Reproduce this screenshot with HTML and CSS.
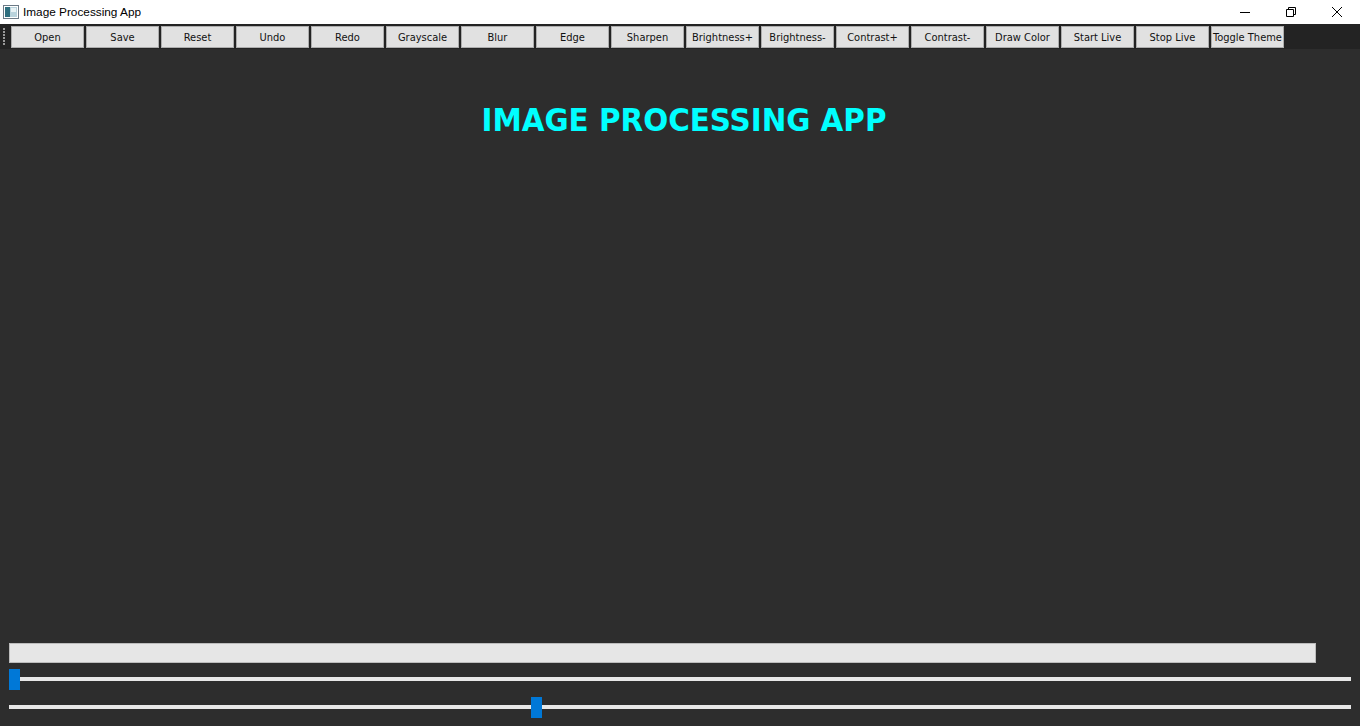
FILE: index.html
```html
<!DOCTYPE html>
<html>
<head>
<meta charset="utf-8">
<link rel="stylesheet" href="styles.css">
</head>
<body>
<div class="window">
  <div class="titlebar">
    <svg class="app-icon" width="16" height="16" viewBox="0 0 16 16">
      <rect x="0.5" y="1.5" width="15" height="13" fill="#fff" stroke="#6c7a86"/>
      <rect x="2" y="3" width="5" height="10" fill="#2f6f7f"/>
      <rect x="7" y="3" width="7" height="10" fill="#b9d3dc"/>
      <rect x="8" y="4" width="5" height="4" fill="#e8f2f5"/>
    </svg>
    <span class="title">Image Processing App</span>
    <div class="controls">
      <div class="ctl">
        <svg width="10" height="10" viewBox="0 0 10 10"><path d="M0 5.5H10" stroke="#000" stroke-width="1"/></svg>
      </div>
      <div class="ctl">
        <svg width="10" height="10" viewBox="0 0 10 10"><path d="M0.5 2.5H7.5V9.5H0.5Z M2.5 2.5V0.5H9.5V7.5H7.5" fill="none" stroke="#000" stroke-width="1"/></svg>
      </div>
      <div class="ctl">
        <svg width="10" height="10" viewBox="0 0 10 10"><path d="M0 0L10 10M10 0L0 10" stroke="#000" stroke-width="1"/></svg>
      </div>
    </div>
  </div>
  <div class="toolbar">
    <div class="grip"><i></i><i></i><i></i><i></i><i></i><i></i></div>
    <button class="btn">Open</button>
    <button class="btn">Save</button>
    <button class="btn">Reset</button>
    <button class="btn">Undo</button>
    <button class="btn">Redo</button>
    <button class="btn">Grayscale</button>
    <button class="btn">Blur</button>
    <button class="btn">Edge</button>
    <button class="btn">Sharpen</button>
    <button class="btn">Brightness+</button>
    <button class="btn">Brightness-</button>
    <button class="btn">Contrast+</button>
    <button class="btn">Contrast-</button>
    <button class="btn">Draw Color</button>
    <button class="btn">Start Live</button>
    <button class="btn">Stop Live</button>
    <button class="btn">Toggle Theme</button>
  </div>
  <div class="main">
    <h1 class="heading">IMAGE PROCESSING APP</h1>
    <div class="spacer"></div>
    <div class="progress"></div>
    <div class="slider"><div class="track"></div><div class="handle" style="left:0px"></div></div>
    <div class="slider"><div class="track"></div><div class="handle" style="left:522px"></div></div>
  </div>
</div>
</body>
</html>
```
FILE: styles.css
```css
* { box-sizing: border-box; }
html, body { margin: 0; padding: 0; }
body { width: 1360px; height: 726px; overflow: hidden; background: #2d2d2d; }
.window { display: flex; flex-direction: column; height: 726px; }
.titlebar {
  height: 24px; background: #fff; display: flex; align-items: center;
  font-family: "Liberation Sans", Arial, sans-serif; font-size: 11.8px; color: #000;
}
.app-icon { margin-left: 3px; margin-right: 4px; }
.title { line-height: 24px; }
.controls { margin-left: auto; display: flex; height: 24px; }
.ctl { width: 46px; height: 24px; display: flex; align-items: center; justify-content: center; }
.toolbar {
  height: 25px; background: #232323; display: flex; align-items: flex-start;
  padding-top: 2px; gap: 2px;
}
.grip { width: 9px; height: 22px; display: flex; flex-direction: column; padding: 2px 0 0 3px; gap: 1px; }
.grip i { display: block; width: 2px; height: 2px; background: #9a9a9a; }
.btn {
  width: 73px; height: 22px; margin: 0; padding: 1px 0 0 0;
  background: #e1e1e1; border: 1px solid #adadad; border-radius: 0;
  font-family: "DejaVu Sans Condensed", "DejaVu Sans", sans-serif; font-size: 11px; color: #111;
  white-space: nowrap; overflow: hidden; line-height: 19px;
}
.main { flex: 1; display: flex; flex-direction: column; padding: 0 9px 0 9px; }
.heading {
  margin: 52px 0 0 0; text-align: center; color: #00ffff;
  font-family: "DejaVu Sans Condensed", "DejaVu Sans", sans-serif; font-weight: bold;
  font-size: 32.7px; line-height: 38px; padding-left: 8px;
}
.spacer { flex: 1; }
.progress { width: 1307px; height: 20px; background: #e6e6e6; border: 1px solid #bcbcbc; }
.slider { position: relative; height: 28px; width: 1342px; }
.slider:last-child { margin-bottom: 7px; }
.track { position: absolute; left: 0; right: 0; top: 14px; height: 4px; background: #e7e7e7; }
.handle { position: absolute; top: 6px; width: 11px; height: 21px; background: #0078d7; }
```
